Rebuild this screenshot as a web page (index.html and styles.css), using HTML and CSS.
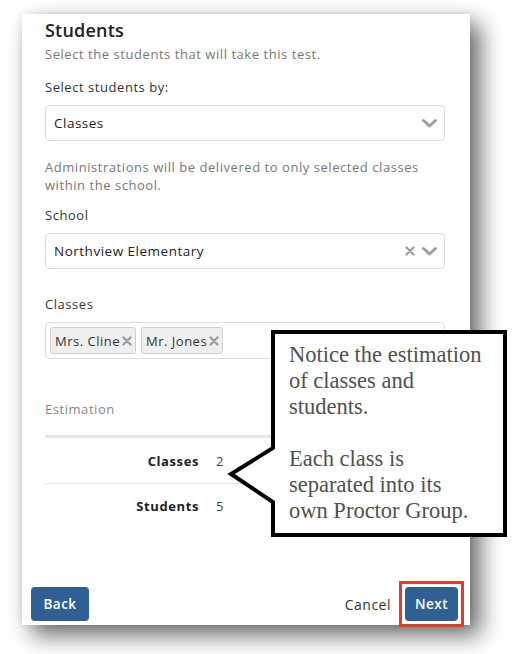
FILE: index.html
```html
<!DOCTYPE html>
<html>
<head>
<meta charset="utf-8">
<link rel="stylesheet" href="styles.css">
</head>
<body>
<div class="card">
  <div class="card-body">
    <h2 class="title">Students</h2>
    <p class="subtitle">Select the students that will take this test.</p>
    <div class="label label-first">Select students by:</div>
    <div class="select">
      <span class="select-value">Classes</span>
      <span class="select-icons">
        <svg class="chev" width="15" height="9" viewBox="0 0 15 9"><path d="M1.5 1.5 L7.5 7 L13.5 1.5" fill="none" stroke="#9b9b9b" stroke-width="2.8" stroke-linecap="round" stroke-linejoin="round"/></svg>
      </span>
    </div>
    <p class="help">Administrations will be delivered to only selected classes<br>within the school.</p>
    <div class="label label-school">School</div>
    <div class="select">
      <span class="select-value">Northview Elementary</span>
      <span class="select-icons">
        <svg class="clear" width="10" height="10" viewBox="0 0 10 10"><path d="M1.5 1.5 L8.5 8.5 M8.5 1.5 L1.5 8.5" fill="none" stroke="#9b9b9b" stroke-width="2.2" stroke-linecap="round"/></svg>
        <svg class="chev" width="15" height="9" viewBox="0 0 15 9"><path d="M1.5 1.5 L7.5 7 L13.5 1.5" fill="none" stroke="#9b9b9b" stroke-width="2.8" stroke-linecap="round" stroke-linejoin="round"/></svg>
      </span>
    </div>
    <div class="label label-classes">Classes</div>
    <div class="multi">
      <span class="tag">Mrs. Cline<svg class="tag-x" width="10" height="10" viewBox="0 0 10 10"><path d="M1.5 1.5 L8.5 8.5 M8.5 1.5 L1.5 8.5" fill="none" stroke="#9b9b9b" stroke-width="2.4" stroke-linecap="round"/></svg></span>
      <span class="tag">Mr. Jones<svg class="tag-x" width="10" height="10" viewBox="0 0 10 10"><path d="M1.5 1.5 L8.5 8.5 M8.5 1.5 L1.5 8.5" fill="none" stroke="#9b9b9b" stroke-width="2.4" stroke-linecap="round"/></svg></span>
    </div>
    <div class="est-label">Estimation</div>
    <div class="est-table">
      <div class="est-row">
        <span class="est-key">Classes</span><span class="est-val">2</span>
      </div>
      <div class="est-row">
        <span class="est-key">Students</span><span class="est-val">5</span>
      </div>
    </div>
  </div>
  <div class="card-footer">
    <button class="btn btn-primary btn-back">Back</button>
    <div class="footer-right">
      <button class="btn btn-link">Cancel</button>
      <button class="btn btn-primary btn-highlight">Next</button>
    </div>
  </div>
</div>

<div class="callout">
  <svg class="callout-shape" width="284" height="211" viewBox="0 0 284 211">
    <path d="M48 4 H280 V207 H48 V174 L6 146 L48 120 Z" fill="#fff" stroke="#000" stroke-width="4" stroke-linejoin="miter"/>
  </svg>
  <div class="callout-text">Notice the estimation<br>of classes and<br>students.<br><br>Each class is<br>separated into its<br>own Proctor Group.</div>
</div>
</body>
</html>
```
FILE: styles.css
```css
* { box-sizing: border-box; }
html, body { margin: 0; padding: 0; background: #fff; }
body {
  width: 517px;
  height: 654px;
  position: relative;
  overflow: hidden;
  font-family: "Open Sans", "DejaVu Sans", sans-serif;
  letter-spacing: 0.55px;
  color: #333;
}
.card {
  margin: 14px 0 0 22px;
  width: 448px;
  height: 611px;
  background: #fff;
  box-shadow: 10px 10px 22px rgba(0,0,0,0.6), 0 0 8px rgba(0,0,0,0.08);
  display: flex;
  flex-direction: column;
}
.card-body {
  padding: 5px 25px 0 23px;
  display: flex;
  flex-direction: column;
}
.title {
  margin: 0;
  font-size: 18px;
  line-height: 22px;
  font-weight: 600;
  letter-spacing: 0.2px;
  color: #222;
}
.subtitle {
  margin: 5px 0 0;
  font-size: 13px;
  line-height: 16px;
  color: #777;
}
.label {
  font-size: 13px;
  line-height: 16px;
  color: #333;
}
.label-first { margin-top: 17px; }
.label-school { margin-top: 13px; }
.label-classes { margin-top: 27px; }
.select {
  margin-top: 10px;
  height: 36px;
  border: 1px solid #dcdcdc;
  border-radius: 4px;
  display: flex;
  align-items: center;
  justify-content: space-between;
  padding: 0 7px 0 8px;
}
.select-value {
  font-size: 13.5px;
  letter-spacing: 0.5px;
  color: #222;
}
.select-icons {
  display: flex;
  align-items: center;
  gap: 7px;
}
.chev { display: block; }
.clear { display: block; }
.help {
  margin: 18px 0 0;
  font-size: 13px;
  line-height: 17.5px;
  color: #777;
}
.multi {
  margin-top: 10px;
  height: 37px;
  border: 1px solid #dcdcdc;
  border-radius: 4px;
  display: flex;
  align-items: center;
  gap: 5px;
  padding: 0 4px;
}
.tag {
  height: 27px;
  display: flex;
  align-items: center;
  gap: 2px;
  padding: 0 3px 0 4px;
  background: #efefef;
  border: 1px solid #cfcfcf;
  border-radius: 3px;
  font-size: 13px;
  letter-spacing: 0.5px;
  color: #333;
}
.tag-x { display: block; }
.est-label {
  margin-top: 42px;
  font-size: 13px;
  line-height: 16px;
  color: #888;
}
.est-table {
  margin-top: 18px;
  border-top: 3px solid #e3e5e8;
}
.est-row {
  height: 45px;
  display: grid;
  grid-template-columns: 154px 1fr;
  align-items: center;
}
.est-row + .est-row { border-top: 1px solid #e6e6e6; }
.est-key {
  text-align: right;
  font-weight: 700;
  font-size: 13px;
  letter-spacing: 0.6px;
  color: #222;
}
.est-val {
  padding-left: 17px;
  font-size: 13px;
  color: #444;
}
.card-footer {
  margin-top: auto;
  padding: 0 12px 4px 9px;
  display: flex;
  justify-content: space-between;
  align-items: center;
}
.footer-right {
  display: flex;
  align-items: center;
  gap: 14px;
}
.btn {
  font-family: "Open Sans", "DejaVu Sans", sans-serif;
  border: none;
  cursor: pointer;
  letter-spacing: 0.5px;
}
.btn-primary {
  height: 34px;
  padding: 0;
  background: #2f6094;
  color: #fff;
  border-radius: 4px;
  font-size: 13.5px;
  font-weight: 600;
}
.btn-back { width: 58px; }
.btn-link {
  background: none;
  padding: 0;
  font-size: 14px;
  color: #333;
}
.btn-highlight {
  width: 53px;
  position: relative;
}
.btn-highlight::after {
  content: "";
  position: absolute;
  left: -6px;
  top: -6px;
  right: -6px;
  bottom: -6px;
  border: 3px solid #e33d27;
}
.callout {
  position: absolute;
  left: 225px;
  top: 328px;
  width: 284px;
  height: 211px;
}
.callout-shape {
  position: absolute;
  left: 0;
  top: 0;
}
.callout-text {
  position: absolute;
  left: 64px;
  top: 14px;
  font-family: "Liberation Serif", "Times New Roman", serif;
  font-size: 22.5px;
  line-height: 26px;
  letter-spacing: 0;
  color: #505050;
  white-space: nowrap;
}
```
